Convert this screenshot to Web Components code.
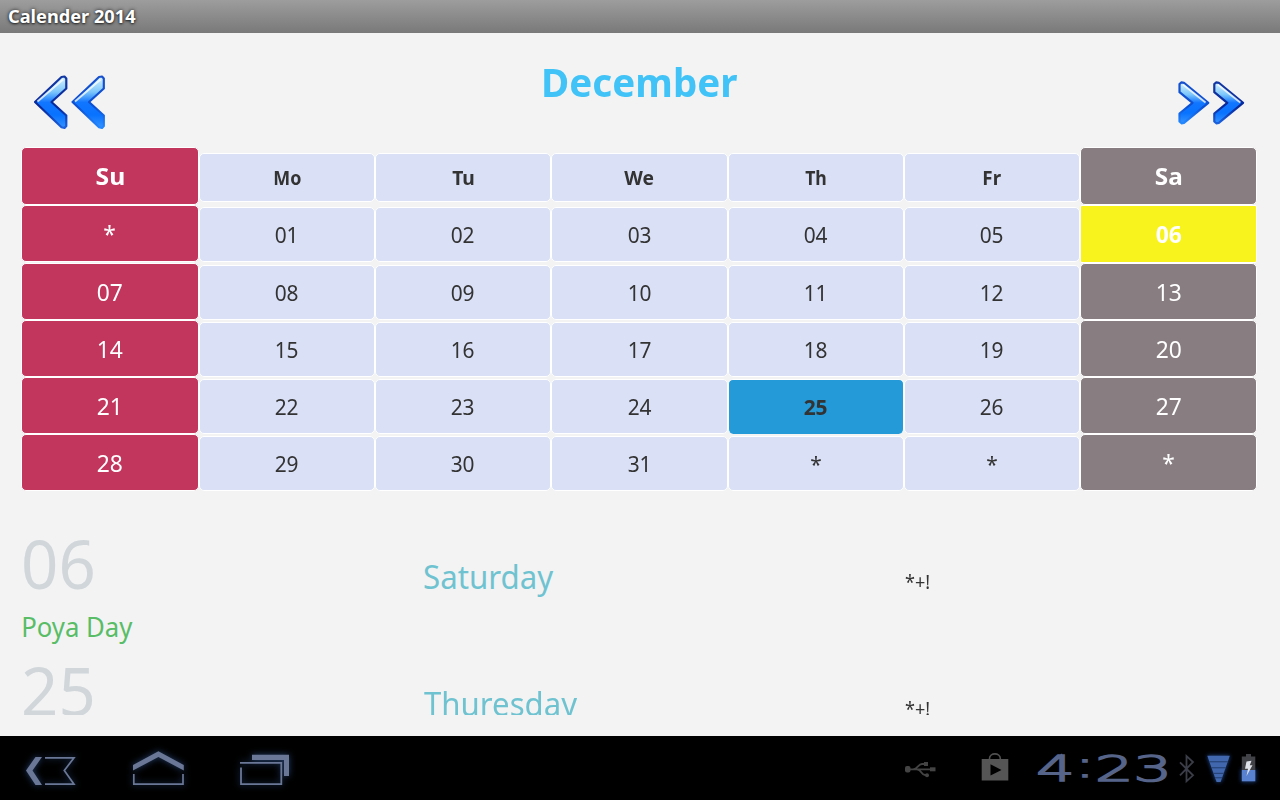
<!DOCTYPE html>
<html lang="en">
<head>
<meta charset="utf-8">
<title>Calender 2014</title>
<style>
html,body{margin:0;height:100%;overflow:hidden;background:#f3f3f3;font-family:"Noto Sans","Open Sans",sans-serif}
</style>
</head>
<body>
<calendar-app></calendar-app>
<script>
const define=(name,html,setup)=>customElements.define(name,class extends HTMLElement{
  connectedCallback(){
    if(this.shadowRoot)return;
    const t=document.createElement('template');
    t.innerHTML=typeof html==='function'?html(this):html;
    this.attachShadow({mode:'open'}).append(t.content.cloneNode(true));
    if(setup)setup(this);
  }
});

/* Text condensed or stretched so that its ink is `w` pixels wide. */
define('fit-text',`<style>:host{display:inline-block;white-space:nowrap}span{display:inline-block}</style><span><slot></slot></span>`,el=>{
  const cs=getComputedStyle(el),c=document.createElement('canvas').getContext('2d');
  c.font=`${cs.fontWeight} ${cs.fontSize} ${cs.fontFamily}`;
  const m=c.measureText(el.textContent);
  const s=el.getAttribute('w')/(m.actualBoundingBoxLeft+m.actualBoundingBoxRight);
  const span=el.shadowRoot.querySelector('span');
  if(el.hasAttribute('centered'))span.style.transform=`scaleX(${s})`;
  else{span.style.transformOrigin='0 50%';span.style.transform=`translateX(${m.actualBoundingBoxLeft*s}px) scaleX(${s})`}
});

define('title-bar',el=>`<style>
:host{display:block;height:33px;background:linear-gradient(#9d9d9d,#797979);box-sizing:border-box;padding-left:9px;
color:#fff;font-weight:700;font-size:18.5px;line-height:32px;text-shadow:0 0 4px #222,0 1px 2px #333}
</style><fit-text w="127">${el.getAttribute('text')}</fit-text>`);

const chevron=(pts,shine,dx,edge,grad)=>`<g transform="translate(${dx} 0)"><polygon points="${pts}" fill="url(#${grad})" stroke="url(#${edge})" stroke-width="2.2" stroke-linejoin="round"/><path d="${shine}" fill="none" stroke="#fff" stroke-opacity=".75" stroke-width="2"/></g>`;
const defs=`<defs>
<linearGradient id="f" x1="0" y1="0" x2="0" y2="1"><stop offset="0" stop-color="#d9f4ff"/><stop offset=".3" stop-color="#7cc6fb"/><stop offset=".5" stop-color="#1175ff"/><stop offset=".75" stop-color="#0873ff"/><stop offset="1" stop-color="#3694ff"/></linearGradient>
<linearGradient id="a" x1="0" y1="0" x2="0" y2="1"><stop offset="0" stop-color="#1238a4"/><stop offset=".6" stop-color="#08289a"/><stop offset="1" stop-color="#1c62df"/></linearGradient>
<linearGradient id="b" x1="0" y1="0" x2="0" y2="1"><stop offset="0" stop-color="#1750cc"/><stop offset=".6" stop-color="#0b50d4"/><stop offset="1" stop-color="#2488ff"/></linearGradient></defs>`;
define('nav-arrows',el=>{
  const style='<style>:host{display:block}svg{display:block}</style>';
  if(el.getAttribute('direction')==='previous'){
    const p='35,102 61.5,77 64.5,76.5 66.3,78.5 66.3,88.5 51.5,102 66.3,115.5 66.3,126 64.5,128 61.5,127.3',s='M37.5 101.5L63 79.5';
    return style+`<svg width="76" height="60" viewBox="32 72 76 60">${defs}${chevron(p,s,0,'a','f')}${chevron(p,s,37.5,'b','f')}</svg>`;
  }
  const p='1179.5,84 1181.5,82.3 1184,82.8 1208.3,102.8 1184,122.8 1181.5,123.3 1179.5,121.5 1179.5,113.5 1192.5,102.8 1179.5,92.2',s='M1183 84.5L1205.5 102.5';
  return style+`<svg width="72" height="60" viewBox="1175 72 72 60">${defs}${chevron(p,s,0,'b','f')}${chevron(p,s,34.8,'a','f')}</svg>`;
});

define('month-header',el=>`<style>
:host{display:flex;height:114px;box-sizing:border-box;padding:39px 33px 0 32px;justify-content:space-between;align-items:flex-start}
h1{margin:-17px 4px 0 0;font-size:39px;line-height:54px;color:#42c3f7;font-weight:700}
</style><nav-arrows direction="previous"></nav-arrows><h1><fit-text centered w="193">${el.getAttribute('month')}</fit-text></h1><nav-arrows direction="next"></nav-arrows>`);

define('day-cell',`<style>
:host{display:flex;align-items:center;justify-content:center;box-sizing:border-box;border:1px solid #fff;border-radius:5px;
background:#dae0f6;color:#333;font-size:22px;margin-top:2px;line-height:1;padding-bottom:2px}
span{display:block;transform:scaleX(.95)}
:host([kind=su]),:host([kind=sa]){margin-top:0;font-size:24px;color:#fff;background:#c2355c;padding-bottom:0}
:host([kind=sa]){background:#887e81}
:host([head]){font-weight:700;font-size:19.5px;margin:6px 0 3px;padding:1px 0 0}
:host([head]) span{transform:none}
:host([head][kind=su]),:host([head][kind=sa]){font-size:24px;margin:0;padding:0}
:host([first]){margin-bottom:1px}
:host([mark=poya]){background:#f9f31d;font-weight:700;border-radius:2px;margin-bottom:0}
:host([mark=holiday]){background:#249ad8;font-weight:700;border-bottom:0}
</style><span><slot></slot></span>`);

define('month-grid',()=>{
  const names=['Su','Mo','Tu','We','Th','Fr','Sa'],inks=[27,27,22,29,21,18,25.5];
  let h='';
  for(let r=0;r<6;r++)for(let c=0;c<7;c++){
    const d=(r-1)*7+c,kind=c===0?'su':c===6?'sa':'wd';
    const text=r===0?`<fit-text centered w="${inks[c]}">${names[c]}</fit-text>`:(d<1||d>31)?'*':String(d).padStart(2,'0');
    const mark=r&&d===6?' mark="poya"':r&&d===25?' mark="holiday"':'';
    h+=`<day-cell kind="${kind}"${r===0?' head':''}${r===1?' first':''}${mark}>${text}</day-cell>`;
  }
  return `<style>:host{display:grid;margin-left:21px;grid-template-columns:178px 176px 176px 177px 176px 176px 177px;grid-template-rows:58px 58px 57px 57px 57px 57px}</style>`+h;
});

define('holiday-item',el=>`<style>
:host{display:block;height:127px}
.row{display:grid;grid-template-columns:401px 482px 1fr;align-items:baseline;height:83px}
.date{font-size:68px;line-height:80px;color:#d0d6da;margin-left:1.5px}
.day{font-size:33.5px;color:#6fc3d1;margin-left:1px}
.code{font-size:19.5px;color:#333}
.name{font-size:28px;line-height:40px;color:#58bd66;margin-left:.7px}
</style><div class="row"><fit-text class="date" w="69">${el.getAttribute('date')}</fit-text><fit-text class="day" w="${el.getAttribute('day-width')}">${el.getAttribute('day')}</fit-text><fit-text class="code" w="24">*+!</fit-text></div>
${el.textContent.trim()?`<fit-text class="name" w="110">${el.textContent}</fit-text>`:''}`);

define('holiday-list',`<style>:host{display:block;margin-top:16px;padding:16px 0 0 22px;height:192px;overflow:hidden}</style><slot></slot>`);

define('system-bar',`<style>
:host{display:flex;height:64px;background:#000}
svg{display:block;flex:none}
.nav svg{filter:drop-shadow(0 0 3px #24406c)}
.nav{display:flex;flex:1}
.clock{width:142px;font:200 36px/64px "DejaVu Sans",sans-serif;color:#56648a;-webkit-text-stroke:1.6px #56648a;padding-left:2px;box-sizing:border-box;margin-top:1px}
.colon{display:inline-block;line-height:1;vertical-align:4px}
</style>
<div class="nav">
<svg width="106" height="64" viewBox="0 736 106 64"><path d="M26 770.5L35.5 757H42L32.5 770.5 42 785H35.5Z" fill="#6b7796"/><path d="M45 757.8H74L64.3 770.5 74 784.2H45" fill="none" stroke="#6b7796" stroke-width="1.7"/></svg>
<svg width="106" height="64" viewBox="106 736 106 64"><path d="M133 765L158.4 751.3 183.8 765V770.5L158.4 757 133 770.5Z" fill="#6b7796"/><path d="M133.8 774V784.2H183V774" fill="none" stroke="#6b7796" stroke-width="1.7"/></svg>
<svg width="106" height="64" viewBox="212 736 106 64"><path d="M252 754.8H289V776H284V760H252Z" fill="#6b7796"/><path d="M240 762.9H281.3V784.2H241V767.5" fill="none" stroke="#6b7796" stroke-width="1.8"/></svg>
</div>
<svg width="136" height="64" viewBox="900 736 136 64"><g fill="none" stroke="#444" stroke-width="1.8"><path d="M907 769.3H934M913 769.3C918 769 918 764 922 764H925M917 769.3C922 770 921 775 925 775H927" /></g><g fill="#444"><rect x="905" y="766" width="5.5" height="6.5" rx="2"/><rect x="924" y="762" width="4" height="4"/><circle cx="927" cy="775.3" r="2"/><path d="M930 767.3H935.5V771.3H930Z"/></g>
<path d="M989.5 760V758.5C989.5 752.3 1000.3 752.3 1000.3 758.5V760" fill="none" stroke="#505050" stroke-width="1.6"/><path fill-rule="evenodd" fill="#555" d="M981.7 759H1008.3V780.5H981.7ZM990.5 764.3V775.5L1001.5 769.9Z"/></svg>
<div class="clock"><fit-text w="129">4<span class="colon">:</span>23</fit-text></div>
<svg width="102" height="64" viewBox="1178 736 102 64"><defs><filter id="glow" x="-50%" y="-50%" width="200%" height="200%"><feGaussianBlur stdDeviation="2.2"/></filter><clipPath id="fan"><path d="M1207.3 755.8H1229.8L1220.6 782H1216.6Z"/></clipPath></defs>
<path d="M1180 762.3L1193 775.3 1186.5 781.3V756L1193 762 1180 775.3" fill="none" stroke="#3b3e48" stroke-width="1.8"/>
<path d="M1207 755.5H1230L1221 782H1216.3Z" fill="#2a57a8" filter="url(#glow)" opacity=".8"/>
<path d="M1207.3 755.8H1229.8L1220.6 782H1216.6Z" fill="#4168af"/><path clip-path="url(#fan)" d="M1207 761.8H1230M1207 767.8H1230M1207 773.3H1230M1207 777.8H1230" stroke="#203b6c" stroke-width="1"/>
<path d="M1241 769H1256V782H1241Z" fill="#2a57a8" filter="url(#glow)" opacity=".7"/>
<path d="M1246 754H1251V756.5H1255.3V770H1241.8V756.5H1246Z" fill="#414247"/><path d="M1241.8 770H1255.3V781.3H1241.8Z" fill="#5882cf"/>
<path d="M1246.5 761.5L1251.5 760.8 1249.8 765.3H1252.5L1246.5 776 1248 768.8H1245Z" fill="#dfe2e8"/></svg>`);

define('calendar-app',`<style>
:host{display:flex;flex-direction:column;height:800px;width:1280px;overflow:hidden;background:#f3f3f3}
main{flex:1;min-height:0}
</style>
<title-bar text="Calender 2014"></title-bar>
<main><month-header month="December"></month-header><month-grid></month-grid>
<holiday-list><holiday-item date="06" day="Saturday" day-width="130">Poya Day</holiday-item><holiday-item date="25" day="Thuresday" day-width="154"></holiday-item></holiday-list></main>
<system-bar></system-bar>`);
</script>
</body>
</html>
